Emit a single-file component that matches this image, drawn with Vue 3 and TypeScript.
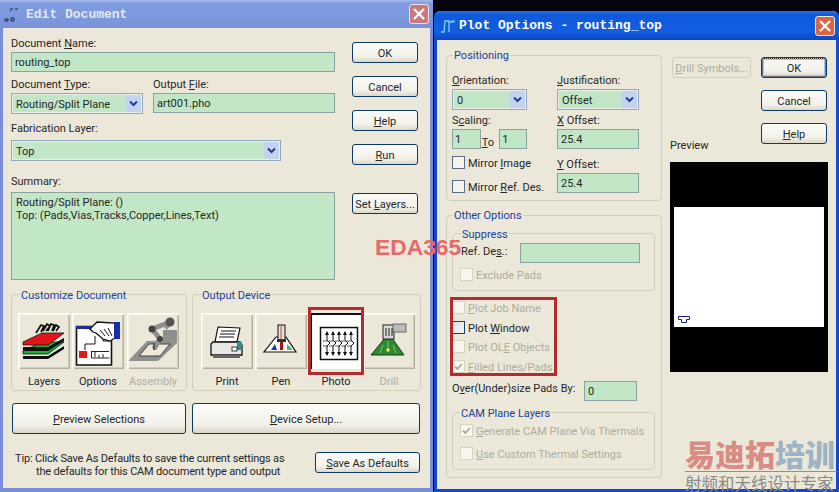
<template>
  <div class="desktop">
    <!-- Edit Document -->
    <section class="win win-left">
      <header class="title title-faded">
        <svg class="title-icon" width="16" height="16" viewBox="0 0 16 16">
          <path d="M6 3h3M11 3h3M6 5h1M9 5v0M1 13h3v2H1zM7 12h3v3H7z" stroke="#1c2a50" stroke-width="1" fill="none" />
        </svg>
        <span class="title-text">Edit Document</span>
        <span class="close close-faded">
          <svg width="14" height="14" viewBox="0 0 14 14"><path d="M2 2l10 10M12 2L2 12" stroke="#fff" stroke-width="2.4" /></svg>
        </span>
      </header>
      <div class="client left-client">
        <div class="top-row">
          <div class="main-col">
            <label class="lbl">Document <u>N</u>ame:</label>
            <div class="input name-input">routing_top</div>
            <div class="two-col">
              <div class="type-col">
                <label class="lbl">Document <u>T</u>ype:</label>
                <div class="combo type-combo">
                  <span>Routing/Split Plane</span>
                  <i class="drop"><svg width="9" height="7" viewBox="0 0 9 7"><path d="M1 1.5l3.5 3.5L8 1.5" stroke="#1f3f92" stroke-width="2" fill="none" /></svg></i>
                </div>
              </div>
              <div class="file-col">
                <label class="lbl">Output <u>F</u>ile:</label>
                <div class="input">art001.pho</div>
              </div>
            </div>
            <label class="lbl fab-lbl">Fabrication Layer:</label>
            <div class="combo fab-combo">
              <span>Top</span>
              <i class="drop"><svg width="9" height="7" viewBox="0 0 9 7"><path d="M1 1.5l3.5 3.5L8 1.5" stroke="#1f3f92" stroke-width="2" fill="none" /></svg></i>
            </div>
            <label class="lbl sum-lbl">Summary:</label>
            <div class="summary">
              <div>Routing/Split Plane: ()</div>
              <div>Top: (Pads,Vias,Tracks,Copper,Lines,Text)</div>
            </div>
          </div>
          <div class="side-col">
            <button class="btn">OK</button>
            <button class="btn">Cancel</button>
            <button class="btn"><u>H</u>elp</button>
            <button class="btn"><u>R</u>un</button>
            <button class="btn layers-btn">Set <u>L</u>ayers...</button>
          </div>
        </div>

        <div class="groups-row">
          <div class="group cust-group">
            <span class="legend">Customize Document</span>
            <div class="tiles">
              <div class="tile-wrap">
                <div class="tile">
                  <svg width="52" height="56" viewBox="0 0 52 56">
                    <path d="M18 20l5-8 3 1-3 6M25 18l4-7 3 2-4 5M30 18l3-7 3 1-2 6M35 18l3-6 3 2-3 4" stroke="#111" stroke-width="1.700" fill="none" />
                    <polygon points="5,43 30,43 46,33 46,36 30,46 5,46" fill="#111" />
                    <polygon points="5,38 24,29 46,29 30,41 5,41" fill="#12b53a" stroke="#111" stroke-width=".8" />
                    <polygon points="5,34 30,34 46,25 46,28 30,38 5,38" fill="#111" />
                    <polygon points="5,29 24,20 46,20 30,32 5,32" fill="#e3151c" stroke="#111" stroke-width=".8" />
                  </svg>
                </div>
                <span class="tile-lbl">Layers</span>
              </div>
              <div class="tile-wrap">
                <div class="tile">
                  <svg width="52" height="56" viewBox="0 0 52 56">
                    <path d="M4 13.5h19M4.500 13v39h35V28" stroke="#111" stroke-width="1.6" fill="#fff" />
                    <path d="M4 13h16v3H4z" fill="#1d2f96" />
                    <path d="M18 16h13v12h7M13 31h10v-8M13 31v6" stroke="#111" stroke-width="1" fill="none" />
                    <path d="M18 16l7-7 18 1v15l-5 3-7-2-7-6-3-1z" fill="#fff" stroke="#111" stroke-width="1.300" />
                    <path d="M28 17l5 6M32 16l5 7M36 15l4 8" stroke="#111" stroke-width="1" />
                    <rect x="42" y="9" width="6" height="17" fill="#1a2ca6" />
                    <rect x="7" y="38" width="8" height="7" fill="#e3151c" />
                    <path d="M19 38.500h18M19.500 39v6h18M23 39v5M27 42v3M31 41v4" stroke="#222" stroke-width="1" fill="none" />
                  </svg>
                </div>
                <span class="tile-lbl">Options</span>
              </div>
              <div class="tile-wrap">
                <div class="tile">
                  <svg width="52" height="56" viewBox="0 0 52 56">
                    <polygon points="2,47 20,28 36,28 36,17 50,17 50,30 31,48 2,48" fill="#8f8f8f" />
                    <polygon points="12,43 22,31 43,31 33,43" fill="#ece9d8" stroke="#444" />
                    <path d="M27 36l5-9M25 16l8 10M25 16l18-7M43 10l-5 5" stroke="#8f8f8f" stroke-width="5" fill="none" />
                    <path d="M27 30v7" stroke="#555" stroke-width="2" />
                    <circle cx="33" cy="26" r="3" fill="#444" />
                    <circle cx="25" cy="16" r="3.500" fill="#444" />
                    <circle cx="43" cy="9" r="4.500" fill="#555" />
                  </svg>
                </div>
                <span class="tile-lbl off">Assembly</span>
              </div>
            </div>
          </div>
          <div class="group out-group">
            <span class="legend">Output Device</span>
            <div class="tiles">
              <div class="tile-wrap">
                <div class="tile">
                  <svg width="52" height="56" viewBox="0 0 52 56">
                    <polygon points="17,14 39,15 36,29 14,29" fill="#fff" stroke="#111" stroke-width="1.200" />
                    <path d="M20 18h15M19 21h15M18 24h15" stroke="#111" stroke-width="1" />
                    <path d="M12 29h27l2 3v10H10V31z" fill="#e6e8e6" stroke="#111" stroke-width="1.300" />
                    <path d="M36 29h5v8h-5z" fill="#2f8f8f" />
                    <rect x="31" y="34" width="5" height="4" fill="#fff" stroke="#111" stroke-width=".8" />
                    <rect x="12" y="42" width="27" height="3" fill="#666" />
                  </svg>
                </div>
                <span class="tile-lbl">Print</span>
              </div>
              <div class="tile-wrap">
                <div class="tile">
                  <svg width="52" height="56" viewBox="0 0 52 56">
                    <polygon points="21,24 31,24 41,39 9,39" fill="#fff" stroke="#111" stroke-width="1.200" />
                    <rect x="23" y="12" width="7" height="15" fill="#eadfd0" stroke="#111" />
                    <rect x="25" y="13" width="2" height="13" fill="#c99" />
                    <rect x="22" y="26" width="9" height="3" fill="#333" />
                    <rect x="25" y="29" width="3" height="8" fill="#a11" />
                    <path d="M20 31l-4 6h6z" fill="#1a36b5" />
                    <path d="M32 31l0 6h6z" fill="#3bc45a" />
                  </svg>
                </div>
                <span class="tile-lbl">Pen</span>
              </div>
              <div class="tile-wrap">
                <div class="tile pressed">
                  <svg width="52" height="56" viewBox="0 0 52 56">
                    <rect x="10.500" y="14.500" width="37" height="32" fill="#fff" stroke="#111" stroke-width="1.500" />
                    <path d="M17 19v8l3 3-3 3v9M23 19v8l3 3-3 3v9M29 19v8l3 3-3 3v9M35 19v8l3 3-3 3v9M41 19v8l3 3-3 3v9" stroke="#111" stroke-width="1" fill="none" />
                    <path d="M15 22l2-4 2 4zM21 22l2-4 2 4zM27 22l2-4 2 4zM33 22l2-4 2 4zM39 22l2-4 2 4zM15 39l2 4 2-4zM21 39l2 4 2-4zM27 39l2 4 2-4zM33 39l2 4 2-4zM39 39l2 4 2-4z" fill="#111" />
                    <path d="M13 28h5M19 28h5M25 28h5M31 28h5M37 28h5M13 33h5M19 33h5M25 33h5M31 33h5M37 33h5" stroke="#111" stroke-width=".7" />
                  </svg>
                </div>
                <span class="tile-lbl">Photo</span>
              </div>
              <div class="tile-wrap">
                <div class="tile">
                  <svg width="52" height="56" viewBox="0 0 52 56">
                    <polygon points="22,25 29,25 41,42 8,42" fill="#2e8a32" stroke="#143d16" />
                    <path d="M25 28v11M20 32l-3 8M30 32l3 8" stroke="#8fd08f" stroke-width=".8" />
                    <circle cx="25" cy="37" r="1.800" fill="#e6e64a" />
                    <rect x="20" y="12" width="11" height="14" fill="#d9d9d9" stroke="#222" />
                    <rect x="30" y="11" width="13" height="8" fill="#bbb" stroke="#666" />
                    <path d="M23 15v8M26 15v8M29 15v8" stroke="#222" />
                  </svg>
                </div>
                <span class="tile-lbl off">Drill</span>
              </div>
            </div>
            <div class="red-box photo-mark"></div>
          </div>
        </div>

        <div class="wide-row">
          <button class="btn preview-btn"><u>P</u>review Selections</button>
          <button class="btn device-btn"><u>D</u>evice Setup...</button>
        </div>

        <div class="tip-row">
          <div class="tip">
            <div>Tip: Click Save As Defaults to save the current settings as</div>
            <div class="tip-2">the defaults for this CAM document type and output</div>
          </div>
          <button class="btn save-btn"><u>S</u>ave As Defaults</button>
        </div>
      </div>
    </section>

    <!-- Plot Options -->
    <section class="win win-right">
      <header class="title title-active">
        <svg class="title-icon" width="16" height="16" viewBox="0 0 16 16">
          <path d="M1 14h3l1-11h4v11M9 4h3M12 2v3M14 2v3" stroke="#7fd0ff" stroke-width="1.300" fill="none" />
        </svg>
        <span class="title-text">Plot Options - routing_top</span>
        <span class="close close-active">
          <svg width="14" height="14" viewBox="0 0 14 14"><path d="M2 2l10 10M12 2L2 12" stroke="#fff" stroke-width="2.4" /></svg>
        </span>
      </header>
      <div class="client right-client">
        <div class="opts-col">
          <div class="group pos-group">
            <span class="legend">Positioning</span>
            <div class="pos-cols">
              <div class="pos-a">
                <label class="lbl"><u>O</u>rientation:</label>
                <div class="combo orient-combo">
                  <span>0</span>
                  <i class="drop"><svg width="9" height="7" viewBox="0 0 9 7"><path d="M1 1.5l3.5 3.5L8 1.5" stroke="#1f3f92" stroke-width="2" fill="none" /></svg></i>
                </div>
                <label class="lbl mt3">S<u>c</u>aling:</label>
                <div class="scale-row">
                  <div class="input scale-input">1</div>
                  <span class="to"><u>T</u>o</span>
                  <div class="input scale-input short">1</div>
                </div>
                <div class="check mirror-1"><i class="box"></i><span>Mirror <u>I</u>mage</span></div>
                <div class="check mirror-2"><i class="box"></i><span>Mirror <u>R</u>ef. Des.</span></div>
              </div>
              <div class="pos-b">
                <label class="lbl"><u>J</u>ustification:</label>
                <div class="combo just-combo">
                  <span>Offset</span>
                  <i class="drop"><svg width="9" height="7" viewBox="0 0 9 7"><path d="M1 1.5l3.5 3.5L8 1.5" stroke="#1f3f92" stroke-width="2" fill="none" /></svg></i>
                </div>
                <label class="lbl mt3"><u>X</u> Offset:</label>
                <div class="input off-input">25.4</div>
                <label class="lbl y-lbl"><u>Y</u> Offset:</label>
                <div class="input off-input">25.4</div>
              </div>
            </div>
          </div>

          <div class="group other-group">
            <span class="legend">Other Options</span>
            <div class="group suppress">
              <span class="legend">Suppress</span>
              <div class="ref-row">
                <span class="lbl">Ref. De<u>s</u>.:</span>
                <div class="input ref-input"></div>
              </div>
              <div class="check off exclude"><i class="box"></i><span>Exclude Pads</span></div>
            </div>
            <div class="plot-list">
              <div class="check off"><i class="box"></i><span><u>P</u>lot Job Name</span></div>
              <div class="check"><i class="box focus"></i><span>Plot <u>W</u>indow</span></div>
              <div class="check off"><i class="box"></i><span>Plot OL<u>E</u> Objects</span></div>
              <div class="check off"><i class="box tick"><svg width="11" height="11" viewBox="0 0 11 11"><path d="M2 5.500l2.500 2.500L9 3" stroke="#aaa89a" stroke-width="1.800" fill="none" /></svg></i><span><u>F</u>illed Lines/Pads</span></div>
              <div class="red-box plot-mark"></div>
            </div>
            <div class="over-row">
              <span class="lbl">O<u>v</u>er(Under)size Pads By:</span>
              <div class="input over-input">0</div>
            </div>
            <div class="group cam-group">
              <span class="legend">CAM Plane Layers</span>
              <div class="check off gen"><i class="box tick"><svg width="11" height="11" viewBox="0 0 11 11"><path d="M2 5.500l2.500 2.500L9 3" stroke="#aaa89a" stroke-width="1.800" fill="none" /></svg></i><span><u>G</u>enerate CAM Plane Via Thermals</span></div>
              <div class="check off custom"><i class="box"></i><span><u>U</u>se Custom Thermal Settings</span></div>
            </div>
          </div>
        </div>

        <div class="preview-col">
          <div class="top-btns">
            <button class="btn drill-btn" disabled><u>D</u>rill Symbols...</button>
            <div class="stack">
              <button class="btn default-btn">OK</button>
              <button class="btn">Cancel</button>
              <button class="btn"><u>H</u>elp</button>
            </div>
          </div>
          <div class="lbl preview-lbl">Preview</div>
          <div class="preview">
            <div class="sheet">
              <svg width="12" height="8" viewBox="0 0 12 8"><path d="M.5.5h11v3h-3v3h-5v-3h-3z" fill="#fff" stroke="#1a1a8c" /></svg>
            </div>
          </div>
        </div>
      </div>
    </section>

    <div class="wm-eda">EDA365</div>
    <div class="wm-cn">
      <div class="wm-big"><span class="wm-red">易迪拓</span><span class="wm-blue">培训</span></div>
      <div class="wm-small">射频和天线设计专家</div>
    </div>
  </div>
</template>

<script setup lang="ts">
</script>

<style>
html, body { margin: 0; background: #000; overflow: hidden; }
</style>

<style scoped>
.desktop {
  position: relative;
  width: 839px;
  height: 492px;
  background: #03040f;
  overflow: hidden;
  font-family: Roboto, "Liberation Sans", Arial, sans-serif;
  font-size: 11px;
  color: #262626;
}
.win { position: absolute; box-sizing: border-box; display: flex; flex-direction: column; }
.win-left {
  left: 0; top: 0; width: 433px; height: 492px;
  background: #ebe8da;
  border: solid #7a8ddb;
  border-width: 0 3px 4px 3px;
}
.win-right {
  left: 434px; top: 11px; width: 405px; height: 481px;
  background: #ebe8da;
  border: solid #1349cf;
  border-width: 0 3px 3px 3px;
  border-radius: 6px 6px 0 0;
}
.title {
  display: flex;
  align-items: center;
  margin: 0 -3px;
  flex: none;
  font-family: "Liberation Mono", monospace;
  font-weight: 700;
  font-size: 13px;
  color: #fff;
}
.title-faded {
  height: 28px;
  padding: 0 4px;
  background: linear-gradient(#a5b9ea 0, #7f9ce0 12%, #7d97dd 70%, #7a8fd6 100%);
  color: #e4e9f2;
}
.title-active {
  height: 29px;
  padding: 0 4px 0 6px;
  border-radius: 6px 6px 0 0;
  background: linear-gradient(#2a72ea 0, #0e58dc 15%, #135ee0 70%, #0b47c4 100%);
}
.title-icon { flex: none; }
.title-faded .title-text { margin-left: 6px; }
.title-active .title-text { margin-left: 3px; }
.close {
  margin-left: auto;
  width: 20px;
  height: 20px;
  border: 1px solid #e8e8f0;
  border-radius: 3px;
  box-sizing: border-box;
  display: flex;
  align-items: center;
  justify-content: center;
}
.close-faded { background: #c9787f; }
.close-active { background: #dc6440; }
.client { flex: 1; min-height: 0; display: flex; }
.left-client { flex-direction: column; padding: 8px 0 0 8px; }
.top-row { display: flex; height: 244px; }
.main-col { width: 324px; }
.lbl { display: block; height: 14px; line-height: 16px; white-space: nowrap; }
u { text-underline-offset: 1px; }
.input {
  box-sizing: border-box;
  height: 20px;
  line-height: 20px;
  padding: 0 3px;
  background: #c2e7c6;
  border: 1px solid #8aa2a0;
  white-space: nowrap;
}
.name-input { margin-top: 2px; }
.two-col { display: flex; margin-top: 5px; }
.type-col { width: 132px; }
.file-col { width: 182px; margin-left: 10px; }
.two-col .input { margin-top: 2px; }
.combo {
  box-sizing: border-box;
  height: 21px;
  display: flex;
  align-items: center;
  justify-content: space-between;
  padding: 0 1px 0 4px;
  background: #c2e7c6;
  border: 1px solid #93a8bd;
  box-shadow: inset 0 0 0 1px #e8eee8;
}
.combo > span { padding-top: 2px; }
.type-combo { margin-top: 2px; }
.fab-lbl { margin-top: 7px; }
.fab-combo { width: 270px; margin-top: 5px; }
.drop {
  width: 15px;
  height: 17px;
  background: #c3d3ef;
  border-radius: 2px;
  display: flex;
  align-items: center;
  justify-content: center;
}
.sum-lbl { margin-top: 13px; }
.summary {
  box-sizing: border-box;
  margin-top: 4px;
  height: 88px;
  padding: 3px 4px;
  line-height: 13px;
  background: #c2e7c6;
  border: 1px solid #8aa2a0;
}
.side-col { width: 66px; margin-left: 17px; padding-top: 6px; display: flex; flex-direction: column; gap: 13px; }
.btn {
  box-sizing: border-box;
  height: 21px;
  width: 66px;
  padding: 1px 0 0;
  font: inherit;
  color: #262626;
  border: 1px solid #0b3a66;
  border-radius: 3px;
  background: linear-gradient(#fbfbf8, #f2f1ea 70%, #dcd8c8);
  white-space: nowrap;
}
.layers-btn { margin-top: 15px; }
.groups-row { display: flex; gap: 5px; margin-top: 14px; }
.group {
  position: relative;
  box-sizing: border-box;
  border: 1px solid #d2cfbd;
  border-radius: 4px;
}
.legend {
  position: absolute;
  top: -6px;
  left: 8px;
  padding: 0 1px;
  background: #ebe8da;
  color: #21409a;
  line-height: 14px;
  white-space: nowrap;
}
.pos-group > .legend, .other-group > .legend { left: 6px; top: -7px; }
.cam-group > .legend { left: 7px; }
.cust-group { width: 176px; height: 97px; }
.out-group { width: 229px; height: 97px; }
.tiles { display: flex; padding: 18px 0 0 6px; gap: 2px; }
.cust-group .tile-wrap:nth-child(3) { margin-left: 1px; }
.out-group .tiles { padding-left: 8px; gap: 2px; }
.out-group .tile-wrap:nth-child(3) { margin-left: 1px; }
.out-group .tile-wrap:nth-child(4) { margin-left: -1px; }
.tile-wrap { width: 52px; display: flex; flex-direction: column; align-items: center; }
.tile {
  box-sizing: border-box;
  width: 52px;
  height: 56px;
  background: #ebe8da;
  box-shadow: inset 1px 1px 0 #fff, inset 2px 2px 0 #f6f5ee, inset -1px -1px 0 #b3b0a0, inset -2px -2px 0 #cfccba;
}
.tile svg { display: block; }
.tile.pressed { background: #fff; box-shadow: inset 2px 2px 0 #111; }
.tile-lbl { margin-top: 6px; line-height: 14px; }
.tile-lbl.off { color: #b0aea0; }
.red-box {
  position: absolute;
  box-sizing: border-box;
  border: 3px solid #b52a2c;
}
.photo-mark { left: 115px; top: 12px; width: 56px; height: 68px; }
.wide-row { display: flex; margin-top: 12px; padding-left: 1px; }
.preview-btn { width: 174px; height: 31px; }
.device-btn { width: 228px; height: 31px; margin-left: 6px; }
.tip-row { display: flex; margin-top: 18px; height: 21px; position: relative; }
.tip { margin-left: 4px; line-height: 13px; width: 300px; white-space: nowrap; letter-spacing: -.18px; }
.tip-2 { padding-left: 21px; }
.save-btn { width: 105px; }

.right-client { padding: 15px 0 0 9px; }
.opts-col { width: 216px; }
.pos-group { height: 146px; }
.pos-cols { display: flex; padding: 17px 0 0 5px; }
.pos-a { width: 105px; }
.pos-b { width: 82px; }
.orient-combo { width: 75px; margin-top: 2px; }
.just-combo { margin-top: 2px; }
.mt3 { margin-top: 3px; }
.scale-row { display: flex; align-items: flex-start; margin-top: 2px; width: 75px; }
.scale-input { width: 29px; padding: 0 2px; }
.scale-input.short { width: 28px; }
.to { width: 18px; padding-left: 1px; margin-top: 7px; line-height: 14px; }
.off-input { margin-top: 2px; }
.y-lbl { margin-top: 8px; }
.check { display: flex; align-items: center; height: 13px; white-space: nowrap; gap: 3px; }
.check > span { padding-top: 2px; }
.check.off { color: #aeac9e; }
.box {
  box-sizing: border-box;
  flex: none;
  display: block;
  width: 13px;
  height: 13px;
  background: #f4f3ec;
  border: 1px solid #5a6d8c;
}
.off .box { border-color: #d6d3c4; background: #f7f6ef; }
.box.focus { background: linear-gradient(135deg, #d8dee6, #f7f7f4); border-color: #203f66; }
.box svg { display: block; }
.mirror-1 { margin-top: 6px; }
.mirror-2 { margin-top: 11px; }
.other-group { height: 263px; margin-top: 14px; }
.suppress { width: 203px; height: 58px; margin: 17px 0 0 5px; }
.ref-row { display: flex; align-items: flex-start; padding: 9px 0 0 8px; }
.ref-row .lbl { width: 59px; margin-top: 1px; }
.ref-input { width: 120px; }
.exclude { margin: 5px 0 0 7px; }
.plot-list { position: relative; margin: 10px 0 0 5px; display: flex; flex-direction: column; gap: 6.500px; }
.plot-mark { left: -2px; top: -4px; width: 107px; height: 79px; }
.over-row { display: flex; align-items: flex-start; margin: 8px 0 0 5px; }
.over-row .lbl { width: 132px; }
.over-input { width: 53px; }
.cam-group { width: 203px; height: 58px; margin: 11px 0 0 5px; }
.gen { margin: 11px 0 0 7px; }
.custom { margin: 10px 0 0 7px; }

.preview-col { margin-left: 8px; width: 160px; position: relative; }
.top-btns { display: flex; margin-left: 2px; padding-top: 2px; }
.drill-btn { width: 79px; border-color: #d2cfbd; color: #aeac9e; background: #ebe8da; }
.stack { margin-left: 10px; display: flex; flex-direction: column; gap: 12px; }
.default-btn { box-shadow: inset 0 0 0 2px #a9bde8; outline: 1px dotted #333; outline-offset: -2px; }
.preview-lbl { margin-top: -6px; }
.preview {
  margin-top: 10px;
  width: 158px;
  height: 210px;
  background: #000;
  padding: 45px 4px;
  box-sizing: border-box;
}
.sheet {
  height: 120px;
  background: #fff;
  display: flex;
  align-items: flex-end;
  padding: 0 0 3px 4px;
  box-sizing: border-box;
}
.sheet svg { display: block; }

.wm-eda {
  position: absolute;
  left: 375px;
  top: 234px;
  font: 700 22.800px/26px "Liberation Sans", Arial, sans-serif;
  color: #e8696a;
}
.wm-cn {
  position: absolute;
  left: 685px;
  top: 436px;
  width: 152px;
  font-family: "Noto Sans CJK SC", sans-serif;
}
.wm-big {
  display: flex;
  height: 35px;
  font-size: 30px;
  line-height: 34px;
  font-weight: 900;
  border-bottom: 1px solid #8a8f98;
}
.wm-red { display: block; height: 34px; color: #d98c84; }
.wm-blue { display: block; height: 34px; color: #9db4c4; }
.wm-small { display: block; height: 18px; margin-top: 2px; font-size: 16.500px; line-height: 18px; color: #8a8a84; white-space: nowrap; }
</style>
